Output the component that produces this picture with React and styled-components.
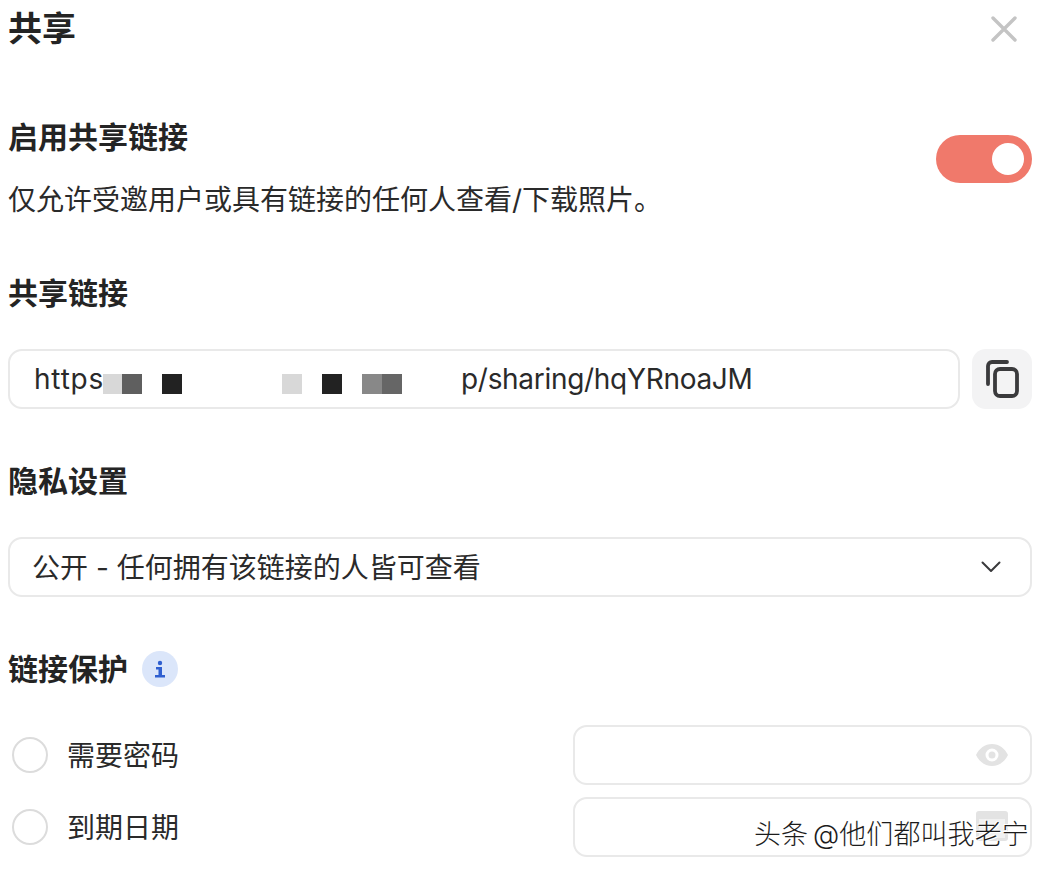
import React from "react";
import styled, { createGlobalStyle } from "styled-components";

const Global = createGlobalStyle`
  html, body { margin: 0; padding: 0; background: #fff; }
  body { font-family: Inter, "Noto Sans CJK SC", sans-serif; color: #222; }
`;

const Page = styled.div`
  position: relative;
  width: 1050px;
  height: 872px;
  box-sizing: border-box;
  padding: 0 18px 0 8px;
  overflow: hidden;
`;
const Header = styled.header`
  display: flex;
  justify-content: space-between;
  align-items: center;
  height: 58px;
`;
const Title = styled.h1`
  margin: 0;
  font-size: 34px;
  line-height: 58px;
  font-weight: 700;
  color: #242424;
`;
const CloseButton = styled.button`
  display: flex;
  border: 0;
  padding: 0;
  margin-right: 15px;
  background: none;
`;
const EnableRow = styled.section`
  display: flex;
  justify-content: space-between;
  align-items: center;
  margin-top: 58px;
`;
const SectionTitle = styled.h2`
  margin: 0;
  font-size: 30px;
  line-height: 42px;
  font-weight: 700;
  color: #242424;
`;
const Description = styled.p`
  margin: 22px 0 0;
  font-size: 28px;
  line-height: 40px;
  color: #2a2a2a;
`;
const Toggle = styled.div`
  display: flex;
  align-items: center;
  justify-content: flex-end;
  width: 96px;
  height: 48px;
  box-sizing: border-box;
  padding-right: 8px;
  border-radius: 24px;
  background: #f0796b;
  margin-top: -19px;
`;
const Knob = styled.span`
  width: 32px;
  height: 32px;
  border-radius: 50%;
  background: #fff;
`;
const Section = styled.section`
  margin-top: ${(p) => p.$top}px;
`;
const LinkRow = styled.div`
  display: flex;
  align-items: center;
  gap: 12px;
  margin-top: 35px;
`;
const Field = styled.div`
  display: flex;
  align-items: center;
  justify-content: space-between;
  box-sizing: border-box;
  height: 60px;
  flex: ${(p) => (p.$grow ? "1" : "none")};
  width: ${(p) => p.$width || "auto"};
  border: 2px solid #e9e9e9;
  border-radius: 14px;
  padding: 0 ${(p) => p.$right || 14}px 0 ${(p) => p.$left || 23}px;
  font-size: 28px;
  color: #2a2a2a;
  white-space: nowrap;
  background: #fff;
`;
const UrlStart = styled.span`
  width: 69px;
  letter-spacing: 0.8px;
`;
const UrlEnd = styled.span`
  letter-spacing: -0.3px;
`;
const Mosaic = styled.span`
  display: flex;
  width: 358px;
  height: 20px;
  margin-top: 9px;
  flex: none;
`;
const Pixel = styled.i`
  display: block;
  width: ${(p) => p.$w}px;
  height: 20px;
  background: ${(p) => p.$c};
`;
const UrlText = styled.span`
  display: flex;
  align-items: center;
`;
const CopyButton = styled.button`
  display: flex;
  align-items: center;
  justify-content: center;
  width: 60px;
  height: 60px;
  padding: 0;
  border: 0;
  border-radius: 14px;
  background: #f3f3f4;
  flex: none;
`;
const SelectField = styled(Field)`
  margin-top: 35px;
`;
const SelectText = styled.span`
  margin-top: -2px;
  margin-left: -1px;
`;
const ProtectHead = styled.div`
  display: flex;
  align-items: center;
  gap: 14px;
`;
const InfoBadge = styled.span`
  display: flex;
  align-items: center;
  justify-content: center;
  width: 36px;
  height: 36px;
  border-radius: 50%;
  background: #dbe6fa;
`;
const OptionList = styled.div`
  display: flex;
  flex-direction: column;
  gap: 12px;
  margin-top: 35px;
`;
const OptionRow = styled.div`
  display: flex;
  align-items: center;
  justify-content: space-between;
`;
const RadioLabel = styled.label`
  display: flex;
  align-items: center;
  gap: 20px;
  padding-left: 4px;
  font-size: 28px;
  color: #2a2a2a;
`;
const OptionText = styled.span`
  margin-top: -3px;
  margin-left: -1px;
`;
const Radio = styled.span`
  width: 36px;
  height: 36px;
  box-sizing: border-box;
  border: 2px solid #dcdcdc;
  border-radius: 50%;
`;
const Watermark = styled.div`
  position: absolute;
  left: 754px;
  top: 817px;
  font-size: 27px;
  font-weight: 300;
  line-height: 36px;
  word-spacing: -3px;
  letter-spacing: 0.1px;
  color: #1c1c1c;
  white-space: nowrap;
  text-shadow: 1px 1px 0 #fff, -1px -1px 0 #fff, 1px 0 0 #fff;
`;

const pixels = [
  [19, "#d8d8d8"], [20, "#5f5f5f"], [20, "#fff"], [20, "#222"], [100, "#fff"],
  [20, "#d8d8d8"], [20, "#fff"], [20, "#222"], [20, "#fff"], [20, "#888"], [20, "#666"],
];

const Eye = () => (
  <svg width="32" height="24" viewBox="0 0 32 24" fill="#e3e3e3">
    <path fillRule="evenodd" d="M16 1C9 1 3 5.500 0 12c3 6.500 9 11 16 11s13-4.500 16-11C29 5.500 23 1 16 1zm0 17.500a6.500 6.500 0 1 1 0-13 6.500 6.500 0 0 1 0 13zM16 8.500a3.500 3.500 0 1 0 0 7 3.500 3.500 0 0 0 0-7z" />
  </svg>
);
const Calendar = () => (
  <svg width="32" height="32" viewBox="0 0 32 32">
    <rect x="0" y="0" width="32" height="30" rx="3" fill="#e3e3e3" />
    <rect x="3" y="8" width="26" height="19" fill="#f1f1f1" />
  </svg>
);

export default function App() {
  return (
    <Page>
      <Global />
      <Header>
        <Title>共享</Title>
        <CloseButton aria-label="关闭">
          <svg width="26" height="26" viewBox="0 0 26 26" fill="none" stroke="#c4c4c4" strokeWidth="3.400" strokeLinecap="round">
            <path d="M2 2l22 22M24 2L2 24" />
          </svg>
        </CloseButton>
      </Header>

      <EnableRow>
        <div>
          <SectionTitle>启用共享链接</SectionTitle>
          <Description>仅允许受邀用户或具有链接的任何人查看/下载照片。</Description>
        </div>
        <Toggle><Knob /></Toggle>
      </EnableRow>

      <Section $top={52}>
        <SectionTitle>共享链接</SectionTitle>
        <LinkRow>
          <Field $grow $left={24}>
            <UrlText>
              <UrlStart>https</UrlStart>
              <Mosaic>
                {pixels.map(([w, c], i) => <Pixel key={i} $w={w} $c={c} />)}
              </Mosaic>
              <UrlEnd>p/sharing/hqYRnoaJM</UrlEnd>
            </UrlText>
          </Field>
          <CopyButton aria-label="复制">
            <svg width="34" height="38" viewBox="0 0 34 38" fill="none" stroke="#3a3a3c" strokeWidth="3.800" strokeLinecap="round" strokeLinejoin="round">
              <path d="M3 24V6a4 4 0 0 1 4-4h15" />
              <rect x="10" y="9" width="22" height="27" rx="5" />
            </svg>
          </CopyButton>
        </LinkRow>
      </Section>

      <Section $top={51}>
        <SectionTitle>隐私设置</SectionTitle>
        <SelectField>
          <SelectText>公开 - 任何拥有该链接的人皆可查看</SelectText>
          <svg width="20" height="12" viewBox="0 0 20 12" fill="none" stroke="#3a3a3c" strokeWidth="2" strokeLinecap="round" strokeLinejoin="round" style={{ marginRight: 15 }}>
            <path d="M1.500 1.500L10 10l8.500-8.500" />
          </svg>
        </SelectField>
      </Section>

      <Section $top={51}>
        <ProtectHead>
          <SectionTitle>链接保护</SectionTitle>
          <InfoBadge>
            <svg width="12" height="18" viewBox="0 0 12 18" fill="#2f5fd0">
              <circle cx="6" cy="3" r="2.200" />
              <path d="M2 7h6v8h3v2.500H1V15h3.500V9.500H2z" />
            </svg>
          </InfoBadge>
        </ProtectHead>
        <OptionList>
          <OptionRow>
            <RadioLabel><Radio /><OptionText>需要密码</OptionText></RadioLabel>
            <Field $width="459px" $right={22}><span /><Eye /></Field>
          </OptionRow>
          <OptionRow>
            <RadioLabel><Radio /><OptionText>到期日期</OptionText></RadioLabel>
            <Field $width="459px" $right={22}><span /><Calendar /></Field>
          </OptionRow>
        </OptionList>
      </Section>

      <Watermark>头条 @他们都叫我老宁</Watermark>
    </Page>
  );
}
